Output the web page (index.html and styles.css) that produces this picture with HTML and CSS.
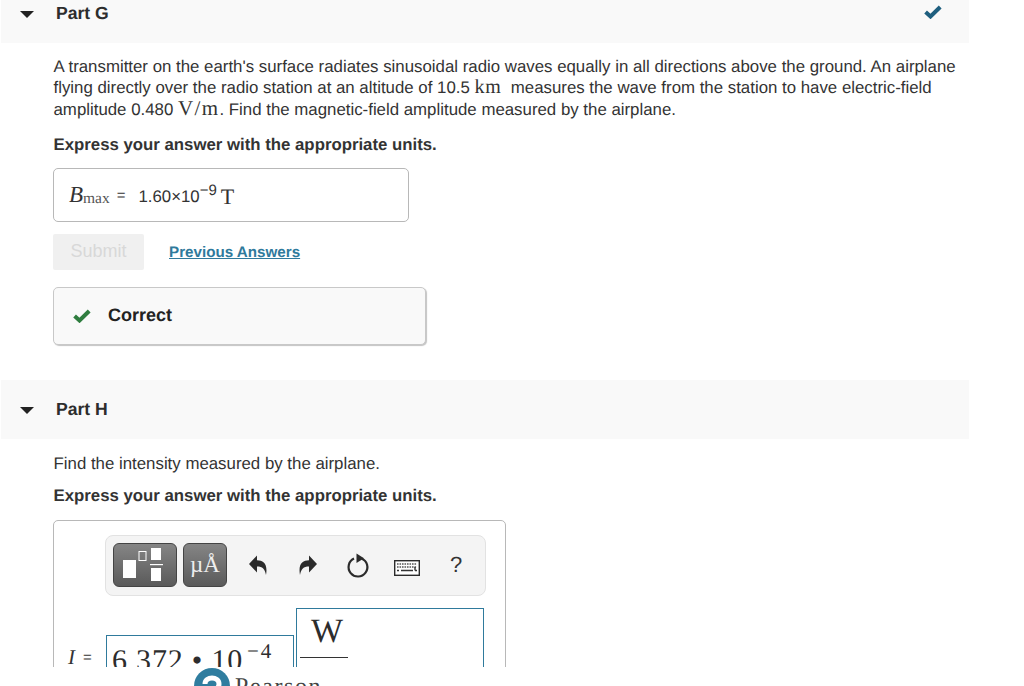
FILE: index.html
```html
<!DOCTYPE html>
<html lang="en">
<head>
<meta charset="utf-8">
<title>Part G and Part H</title>
<link rel="stylesheet" href="styles.css">
</head>
<body>
<main class="viewport">
  <section class="part part-g">
    <header class="part-head head-g">
      <span class="caret"></span>
      <h2 class="part-title">Part G</h2>
      <svg class="done" viewBox="0 0 18 14" width="18" height="14"><path d="M1.6 7 L6.5 11.5 L16.2 2" fill="none" stroke="#1f5f7f" stroke-width="4"/></svg>
    </header>
    <div class="part-body">
      <p class="question">A transmitter on the earth's surface radiates sinusoidal radio waves equally in all directions above the ground. An airplane flying directly over the radio station at an altitude of 10.5 <span class="unit">km</span>&nbsp; measures the wave from the station to have electric-field amplitude 0.480 <span class="unit big">V/m</span>. Find the magnetic-field amplitude measured by the airplane.</p>
      <p class="hint hint-g">Express your answer with the appropriate units.</p>
      <div class="answer-box">
        <span class="var">B</span><span class="sub">max</span><span class="eq">=</span><span class="value">1.60×10<sup class="exp">−9</sup></span><span class="unit big t">T</span>
      </div>
      <div class="actions">
        <button class="submit" type="button" disabled>Submit</button>
        <a class="prev" href="#">Previous Answers</a>
      </div>
      <div class="feedback">
        <svg viewBox="0 0 18 14" width="18" height="14"><path d="M1.6 7 L6.5 11.5 L16.2 2" fill="none" stroke="#2f7d3f" stroke-width="4"/></svg>
        <span>Correct</span>
      </div>
    </div>
  </section>
  <section class="part part-h">
    <header class="part-head head-h">
      <span class="caret"></span>
      <h2 class="part-title">Part H</h2>
    </header>
    <div class="part-body">
      <p class="question">Find the intensity measured by the airplane.</p>
      <p class="hint hint-h">Express your answer with the appropriate units.</p>
      <div class="editor">
        <div class="toolbar">
          <button class="tool tool-templates" type="button" aria-label="Templates">
            <svg viewBox="0 0 62 42" width="62" height="42">
              <rect x="9" y="16" width="13" height="18" fill="#fff"/>
              <rect x="25" y="7.5" width="7" height="9" fill="none" stroke="#fff"/>
              <rect x="37" y="4" width="10" height="12" fill="#fff"/>
              <rect x="36" y="20" width="13" height="1.2" fill="#fff"/>
              <rect x="37" y="24" width="10" height="13" fill="#fff"/>
            </svg>
          </button>
          <button class="tool tool-units" type="button">µÅ</button>
          <svg class="icon i-undo" viewBox="0 0 18 20" width="18" height="20"><path d="M0 9 L8 0.5 V5.2 C14.5 5.2 19 9 17 20 C16 14 13.5 11.5 8 11.5 V17.5 Z" fill="#2b2b2b"/></svg>
          <svg class="icon i-redo" viewBox="0 0 18 20" width="18" height="20"><path d="M18 9 L10 0.5 V5.2 C3.5 5.2 -1 9 1 20 C2 14 4.5 11.5 10 11.5 V17.5 Z" fill="#2b2b2b"/></svg>
          <svg class="icon i-reset" viewBox="0 0 24 26" width="24" height="26"><path d="M8 5.6 A9.4 9.4 0 1 0 15.5 5.4" fill="none" stroke="#2b2b2b" stroke-width="2.2"/><path d="M10.5 0.5 L18 5.2 L10.5 10 Z" fill="#2b2b2b"/></svg>
          <svg class="icon i-keys" viewBox="0 0 26 16" width="26" height="16"><rect x="0.7" y="0.7" width="24.6" height="14.6" fill="#fff" stroke="#2b2b2b" stroke-width="1.4"/><path d="M3 4 H23 M3 7 H23" stroke="#555" stroke-width="1.6" stroke-dasharray="1.6 .9"/><path d="M3 10.5 H5 M7 10.5 H19 M21 10.5 H23 M21 7 V10.5" stroke="#333" stroke-width="1.4"/></svg>
          <span class="help">?</span>
        </div>
        <div class="formula">
          <span class="var i-var">I</span><span class="eq i-eq">=</span>
          <div class="field field-value">6.372 • 10<sup class="f-exp">−4</sup></div>
          <div class="field field-unit"><span class="frac-top">W</span><span class="frac-bar"></span></div>
        </div>
      </div>
    </div>
  </section>
</main>
<footer class="brand">
  <svg viewBox="0 0 36 36" width="36" height="36"><circle cx="18" cy="18" r="18" fill="#2f7d9f"/><path d="M11 16 C11 8 25 8 25 16 C25 21 20 22 17 22 V30" fill="none" stroke="#fff" stroke-width="5"/></svg>
  <span>Pearson</span>
</footer>
</body>
</html>
```
FILE: styles.css
```css
* { box-sizing: border-box; }
html, body { margin: 0; padding: 0; height: 686px; overflow: hidden; background: #fff; }
body { font-family: "Liberation Sans", Arial, sans-serif; font-size: 16.8px; color: #333; text-rendering: geometricPrecision; }
p, h2 { margin: 0; }

.viewport { height: 667px; overflow: hidden; }

.part { width: 968px; margin-left: 1px; }
.part-g { height: 380px; }
.part-head { display: flex; align-items: flex-start; background: #f9f9f9; position: relative; }
.head-g { height: 43px; padding-top: 4px; }
.head-h { height: 59px; padding-top: 20px; }
.caret { width: 0; height: 0; margin: 7px 0 0 19px; border: 7px solid transparent; border-top: 7px solid #222; border-bottom: 0; }
.part-title { margin-left: 22px; font-size: 17.6px; line-height: 19.5px; font-weight: 700; color: #2d2d2d; }
.done { position: absolute; left: 923px; top: 5px; }

.part-body { padding-left: 52px; }
.question { font-size: 16.83px; line-height: 21.4px; }
.part-g .question { padding-top: 13px; }
.part-h .question { padding-top: 14px; }
.question, .hint { margin-left: .5px; }
.hint { font-weight: 700; line-height: 20px; }
.hint-g { margin-top: 14.3px; }
.hint-h { margin-top: 11.5px; }
.unit { font-family: "Liberation Serif", serif; font-size: 20px; line-height: 0; letter-spacing: .7px; }
.big { font-size: 21px; letter-spacing: 1.4px; }

.answer-box { display: flex; align-items: center; width: 356px; height: 54px; margin-top: 13px; padding-left: 15px; background: #fff; border: 1px solid #b8b8b8; border-radius: 5px; }
.var { font-family: "Liberation Serif", serif; font-style: italic; font-size: 23px; }
.sub { font-family: "Liberation Serif", serif; font-size: 15.5px; color: #555; margin-top: 8px; }
.eq { font-size: 15px; margin: 1px 13px 0 7px; }
.value { margin-top: 4px; }
.exp { font-size: 15px; line-height: 0; }
.t { margin-left: 4px; margin-top: 4px; font-size: 22px; }

.actions { display: flex; align-items: center; margin-top: 12px; }
.submit { width: 91px; height: 36px; padding: 0; border: 0; border-radius: 2px; background: #f0f0f0; color: #d8d8d8; font: 18px "Liberation Sans", Arial, sans-serif; }
.prev { margin: 1px 0 0 25px; font-size: 15.2px; font-weight: 700; color: #2f7a9c; text-decoration: underline; }

.feedback { display: flex; align-items: center; gap: 17px; width: 373px; height: 58px; margin-top: 17px; padding-left: 19px; background: #f9f9f9; border: 1px solid #c8c8c8; border-radius: 5px; box-shadow: 1px 1px 1px #c4c4c4; font-size: 18px; font-weight: 700; color: #222; }

.editor { width: 453px; height: 200px; margin-top: 14px; padding: 14px 0 0 51px; border: 1px solid #b8b8b8; border-radius: 5px; }
.toolbar { display: flex; align-items: center; width: 381px; height: 61px; padding-left: 7px; background: #f4f4f4; border: 1px solid #e2e2e2; border-radius: 8px; position: relative; }
.tool { height: 44px; padding: 0; border: 1px solid #444; border-radius: 6px; background: linear-gradient(#858585, #5a5a5a); color: #eee; }
.tool svg { display: block; margin: 0 auto; }
.tool-templates { width: 64px; }
.tool-units { width: 44px; margin-left: 6px; font: 23px "Liberation Serif", serif; }
.icon { position: absolute; }
.i-undo { left: 143px; top: 19px; }
.i-redo { left: 193px; top: 19px; }
.i-reset { left: 240px; top: 17px; }
.i-keys { left: 288px; top: 24px; }
.help { position: absolute; left: 344px; top: 16px; font-size: 22px; color: #333; }

.formula { display: flex; align-items: flex-end; position: relative; height: 100px; margin-top: 12px; }
.i-var { position: absolute; left: -37px; top: 37px; font-size: 21px; }
.i-eq { position: absolute; left: -22px; top: 41px; margin: 0; font-size: 15px; }
.field { position: absolute; border: 1px solid #2f7a9c; background: #fff; font-family: "Liberation Serif", serif; color: #2d2d2d; }
.field-value { left: 1px; top: 27px; width: 188px; height: 80px; padding: 3px 0 0 5px; font-size: 30px; line-height: 43px; letter-spacing: .8px; }
.f-exp { font-size: 21px; line-height: 0; vertical-align: 12px; margin-left: 4px; letter-spacing: 2px; }
.field-unit { left: 191px; top: 0; width: 188px; height: 100px; }
.frac-top { display: block; margin: 4px 0 0 14px; font-size: 34px; line-height: 38px; }
.frac-bar { display: block; width: 48px; height: 1px; margin: 6px 0 0 3px; background: #333; }

.brand { display: flex; align-items: flex-start; gap: 5px; height: 18px; margin: 1px 0 0 194px; overflow: hidden; font-family: "Liberation Serif", serif; font-size: 24px; line-height: 27px; letter-spacing: 1.6px; color: #444; }
.brand svg { flex: none; width: 36px; height: 36px; }
.brand span { margin-top: 6px; }
```
